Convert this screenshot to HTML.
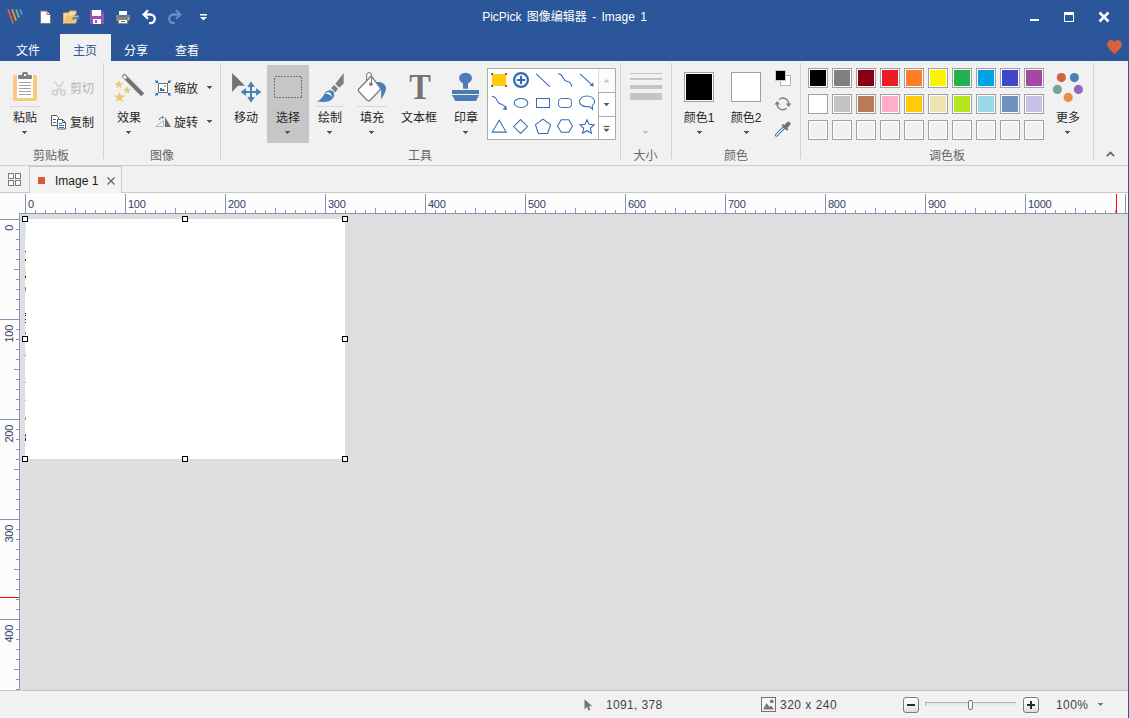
<!DOCTYPE html>
<html lang="zh-CN">
<head>
<meta charset="utf-8">
<title>PicPick 图像编辑器 - Image 1</title>
<style>
*{box-sizing:border-box;margin:0;padding:0}
html,body{width:1129px;height:718px;overflow:hidden;background:#f1f1f1}
body{position:relative;font-family:"Liberation Sans","Noto Sans CJK SC",sans-serif;font-size:12px;color:#262626}
.abs,#app *{position:absolute}
#app{position:absolute;left:0;top:0;width:1129px;height:718px;overflow:hidden}
#titlebar{left:0;top:0;width:1129px;height:61px;background:#2b579a}
#title{left:0;top:9px;width:1129px;text-align:center;color:#fff;font-size:12px;line-height:17px;white-space:pre;word-spacing:2px}
.tab{top:42px;height:18px;line-height:18px;color:#fff;font-size:12px;width:40px;text-align:center}
#tab-home{left:60px;top:34px;width:51px;height:27px;background:#f1f1f1}
#ribbon{left:0;top:61px;width:1128px;height:104px;background:#f1f1f1}
#ribbon-line{left:0;top:165px;width:1128px;height:1px;background:#cecece}
.gsep{top:63px;width:1px;height:96px;background:#d2d2d2}
.lbl{height:16px;line-height:16px;font-size:12px;color:#262626;white-space:nowrap;text-align:center}
.glbl{top:148px;height:16px;line-height:16px;font-size:12px;color:#666;white-space:nowrap;text-align:center}
.dis{color:#b1b1b1}
.arr{width:5px;height:1px;background:#555;color:#555}
.arr::before{content:"";position:absolute;left:1px;top:1px;width:3px;height:1px;background:inherit}
.arr::after{content:"";position:absolute;left:2px;top:2px;width:1px;height:1px;background:inherit}
.arr.lt{background:#c0c0c0}
.hsep{height:1px;background:#d8d8d8}
svg{position:absolute;overflow:visible}
#docbar{left:0;top:166px;width:1128px;height:27px;background:#f1f1f1}
#rulerh{left:0;top:193px;width:1128px;height:21px;background:#fcfcfc}
#rulerv{left:0;top:214px;width:20px;height:476px;background:#fcfcfc}
#canvas{left:20px;top:214px;width:1108px;height:476px;background:#dedede}
#status{left:0;top:690px;width:1128px;height:28px;background:#f1f1f1}
#rborder{left:1128px;top:0;width:1px;height:718px;background:#2b579a}
.rt{font-size:11px;letter-spacing:-.3px;color:#36426a;line-height:11px;white-space:nowrap}
.h{width:6px;height:6px;border:1px solid #000;background:#fff}
.rv{width:30px;height:11px;text-align:right;transform-origin:0 0;transform:rotate(-90deg) translate(-30px,0)}
.st{top:697px;height:16px;line-height:16px;font-size:12px;color:#444;white-space:pre;letter-spacing:.2px}
.zb{width:16px;height:16px;border:1px solid #7c7c7c;border-radius:3px;background:linear-gradient(#fdfdfd,#f4f4f4 50%,#dcdcdc)}
.pc{width:20px;height:20px;border:1px solid #a0a0a0;background:#f0f0f0;box-shadow:inset 0 0 0 1px #fff}
.pc i{left:1px;top:1px;width:16px;height:16px;display:block}
</style>
</head>
<body>
<div id="app">
<div id="titlebar"></div>
<div id="title">PicPick 图像编辑器 - Image 1</div>
<div id="tab-home"></div>
<div class="tab" style="left:8px">文件</div>
<div class="tab" style="left:65px;color:#2b579a">主页</div>
<div class="tab" style="left:116px">分享</div>
<div class="tab" style="left:167px">查看</div>
<svg style="left:0;top:0" width="1129" height="61" viewBox="0 0 1129 61">
<!-- logo -->
<g fill="none" stroke-width="1.700" stroke-linecap="butt">
<path d="M8 9.300L13 23.500" stroke="#e8642f"/>
<path d="M12 9.300L16.200 20.800" stroke="#f39a3c"/>
<path d="M16 9.300L19 17.600" stroke="#6fc08e"/>
<path d="M20 9.300L21.900 14.600" stroke="#4f9fd6"/>
</g>
<!-- new -->
<path d="M40.500 11h6.500l3.500 3.500v9h-10z" fill="#fff" stroke="#7c766c" stroke-width="1"/>
<path d="M47 11v3.500h3.500" fill="none" stroke="#7c766c" stroke-width="1"/>
<!-- open -->
<path d="M63.500 23.500v-10.500h5l1.500-2h6v3" fill="#f7d9a0" stroke="#e9b45c" stroke-width="1"/>
<path d="M63.300 23.500l3-8h12.500l-3 8z" fill="#f1c271"/>
<path d="M72.500 19.500c1-2 3.500-2.500 5.500-1.500" fill="none" stroke="#3f7cbf" stroke-width="1.600"/>
<path d="M79.300 15.800v4.200h-4z" fill="#3f7cbf"/>
<!-- save -->
<path d="M90 10h11.500l2.500 2.500v11.500h-14z" fill="#9553b3"/>
<rect x="92" y="10" width="9" height="6" fill="#fff"/>
<rect x="93" y="19" width="8" height="5" fill="#fff"/>
<rect x="95" y="20" width="2" height="3" fill="#9553b3"/>
<!-- print -->
<rect x="119" y="11" width="8" height="4" fill="#fff"/>
<rect x="116" y="15" width="14" height="6" fill="#8b8578"/>
<rect x="119" y="15" width="8" height="2" fill="#3f7cbf"/>
<rect x="118.500" y="19.500" width="9" height="4" fill="#fff" stroke="#8b8578"/>
<rect x="121" y="21" width="4" height="1" fill="#3f7cbf"/>
<rect x="128" y="18" width="1" height="1" fill="#fff"/>
<!-- undo -->
<path d="M144 14.500h6.500a4.300 4.300 0 0 1 0 8.600h-1.500" fill="none" stroke="#fff" stroke-width="2.300"/>
<path d="M148 10.300l-4.300 4.200 4.300 4.200" fill="none" stroke="#fff" stroke-width="2.300"/>
<!-- redo -->
<path d="M180 14.500h-6.500a4.300 4.300 0 0 0 0 8.600h1.500" fill="none" stroke="#6b8cc4" stroke-width="2.300"/>
<path d="M176 10.300l4.300 4.200-4.300 4.200" fill="none" stroke="#6b8cc4" stroke-width="2.300"/>
<!-- dropdown -->
<rect x="200" y="14" width="7" height="1.500" fill="#fff"/>
<path d="M200 17h7l-3.500 3.500z" fill="#fff"/>
<!-- window controls -->
<rect x="1030" y="19" width="9" height="2" fill="#fff"/>
<path d="M1064 12h10v10h-10zM1065 15v6h8v-6z" fill="#fff" fill-rule="evenodd"/>
<path d="M1099.500 12.500l9 9M1108.500 12.500l-9 9" stroke="#fff" stroke-width="2.500" fill="none"/>
<!-- heart -->
<path d="M1114.500 54c-3-3-7.300-6-7.300-9.800c0-2.500 1.800-4.200 3.900-4.200c1.500 0 2.700.8 3.400 2c.7-1.200 1.900-2 3.400-2c2.100 0 3.900 1.700 3.900 4.200c0 3.800-4.300 6.800-7.300 9.800z" fill="#d66140"/>
</svg>

<div id="ribbon"></div>
<div id="ribbon-line"></div>
<div class="gsep" style="left:103px"></div>
<div class="gsep" style="left:220px"></div>
<div class="gsep" style="left:620px"></div>
<div class="gsep" style="left:671px"></div>
<div class="gsep" style="left:800px"></div>
<div class="gsep" style="left:1093px"></div>
<div class="glbl" style="left:21px;width:60px">剪贴板</div>
<div class="glbl" style="left:132px;width:60px">图像</div>
<div class="glbl" style="left:390px;width:60px">工具</div>
<div class="glbl" style="left:615.5px;width:60px">大小</div>
<div class="glbl" style="left:706px;width:60px">颜色</div>
<div class="glbl" style="left:917px;width:60px">调色板</div>
<div style="left:267px;top:65px;width:42px;height:78px;background:#c6c6c6"></div>
<div class="lbl" style="left:-5px;top:110px;width:60px">粘贴</div>
<div class="lbl" style="left:99px;top:110px;width:60px">效果</div>
<div class="lbl" style="left:216px;top:110px;width:60px">移动</div>
<div class="lbl" style="left:258px;top:110px;width:60px">选择</div>
<div class="lbl" style="left:300px;top:110px;width:60px">绘制</div>
<div class="lbl" style="left:342px;top:110px;width:60px">填充</div>
<div class="lbl" style="left:389px;top:110px;width:60px">文本框</div>
<div class="lbl" style="left:436px;top:110px;width:60px">印章</div>
<div class="lbl" style="left:669px;top:110px;width:60px">颜色1</div>
<div class="lbl" style="left:716px;top:110px;width:60px">颜色2</div>
<div class="lbl" style="left:1038px;top:110px;width:60px">更多</div>
<div class="arr" style="left:22px;top:131px"></div>
<div class="arr" style="left:126px;top:131px"></div>
<div class="arr" style="left:285px;top:131px"></div>
<div class="arr" style="left:327px;top:131px"></div>
<div class="arr" style="left:369px;top:131px"></div>
<div class="arr" style="left:463px;top:131px"></div>
<div class="arr lt" style="left:643px;top:131px"></div>
<div class="arr" style="left:697px;top:131px"></div>
<div class="arr" style="left:744px;top:131px"></div>
<div class="arr" style="left:1065px;top:131px"></div>
<div class="hsep" style="left:10px;top:106px;width:30px"></div>
<div class="hsep" style="left:315px;top:106px;width:30px"></div>
<div class="hsep" style="left:357px;top:106px;width:30px"></div>
<div class="lbl dis" style="left:70px;top:81px;text-align:left">剪切</div>
<div class="lbl" style="left:70px;top:115px;text-align:left">复制</div>
<div class="lbl" style="left:174px;top:81px;text-align:left">缩放</div>
<div class="lbl" style="left:174px;top:115px;text-align:left">旋转</div>
<div class="arr" style="left:207px;top:86px"></div>
<div class="arr" style="left:207px;top:120px"></div>
<div style="left:487px;top:68px;width:129px;height:72px;background:#fff;border:1px solid #ababab"></div>
<div style="left:598px;top:69px;width:17px;height:23px;background:#fbfbfb;border-left:1px solid #dcdcdc"></div>
<div style="left:598px;top:92px;width:18px;height:25px;background:#fff;border:1px solid #ababab"></div>
<div style="left:598px;top:116px;width:18px;height:24px;background:#fff;border:1px solid #ababab"></div>
<div style="left:630px;top:73px;width:32px;height:1px;background:#c4c4c4"></div>
<div style="left:630px;top:78px;width:32px;height:2px;background:#c4c4c4"></div>
<div style="left:630px;top:85px;width:32px;height:4px;background:#c4c4c4"></div>
<div style="left:630px;top:93px;width:32px;height:7px;background:#c4c4c4"></div>
<div style="left:684px;top:72px;width:30px;height:30px;border:1px solid #a0a0a0;background:#fff"><i style="left:1px;top:1px;width:26px;height:26px;background:#000;display:block"></i></div>
<div style="left:731px;top:72px;width:30px;height:30px;border:1px solid #a0a0a0;background:#fff"></div>
<div class="pc" style="left:808px;top:68px"><i style="background:#000000"></i></div>
<div class="pc" style="left:832px;top:68px"><i style="background:#7f7f7f"></i></div>
<div class="pc" style="left:856px;top:68px"><i style="background:#880015"></i></div>
<div class="pc" style="left:880px;top:68px"><i style="background:#ed1c24"></i></div>
<div class="pc" style="left:904px;top:68px"><i style="background:#ff7f27"></i></div>
<div class="pc" style="left:928px;top:68px"><i style="background:#fff200"></i></div>
<div class="pc" style="left:952px;top:68px"><i style="background:#22b14c"></i></div>
<div class="pc" style="left:976px;top:68px"><i style="background:#00a2e8"></i></div>
<div class="pc" style="left:1000px;top:68px"><i style="background:#3f48cc"></i></div>
<div class="pc" style="left:1024px;top:68px"><i style="background:#a349a4"></i></div>
<div class="pc" style="left:808px;top:94px"><i style="background:#ffffff"></i></div>
<div class="pc" style="left:832px;top:94px"><i style="background:#c3c3c3"></i></div>
<div class="pc" style="left:856px;top:94px"><i style="background:#b97a57"></i></div>
<div class="pc" style="left:880px;top:94px"><i style="background:#ffaec9"></i></div>
<div class="pc" style="left:904px;top:94px"><i style="background:#ffc90e"></i></div>
<div class="pc" style="left:928px;top:94px"><i style="background:#efe4b0"></i></div>
<div class="pc" style="left:952px;top:94px"><i style="background:#b5e61d"></i></div>
<div class="pc" style="left:976px;top:94px"><i style="background:#99d9ea"></i></div>
<div class="pc" style="left:1000px;top:94px"><i style="background:#7092be"></i></div>
<div class="pc" style="left:1024px;top:94px"><i style="background:#c8bfe7"></i></div>
<div class="pc" style="left:808px;top:120px"></div>
<div class="pc" style="left:832px;top:120px"></div>
<div class="pc" style="left:856px;top:120px"></div>
<div class="pc" style="left:880px;top:120px"></div>
<div class="pc" style="left:904px;top:120px"></div>
<div class="pc" style="left:928px;top:120px"></div>
<div class="pc" style="left:952px;top:120px"></div>
<div class="pc" style="left:976px;top:120px"></div>
<div class="pc" style="left:1000px;top:120px"></div>
<div class="pc" style="left:1024px;top:120px"></div>
<svg style="left:0;top:0" width="1129" height="170" viewBox="0 0 1129 170">
<rect x="13" y="75" width="24" height="26" rx="1.800" fill="#fbc97e"/>
<rect x="17" y="75" width="16" height="23" fill="#fff"/>
<rect x="22" y="72" width="6" height="5" rx="2" fill="#808080"/><rect x="18" y="75" width="14" height="4" rx=".8" fill="#808080"/><rect x="24" y="74" width="2" height="2" fill="#fff"/>
<path d="M19 82.500h12M19 85.500h12M19 88.500h12M19 91.500h12M19 94.500h12" stroke="#a3a3a3" stroke-width="1" shape-rendering="crispEdges"/>
<g fill="none" stroke="#cbcbcb" stroke-width="1.300"><circle cx="55" cy="92.800" r="2.400"/><circle cx="63" cy="92.800" r="2.400"/></g>
<path d="M53.800 81.300L55 81.200L62.300 90.800L60.700 91.600ZM64.200 81.300L63 81.200L55.700 90.800L57.300 91.600Z" fill="#cbcbcb"/>
<path d="M51.500 115.500h5l2 2v8h-7z" fill="#fff" stroke="#5a5a5a" stroke-width="1"/>
<path d="M53 119.500h3M53 122.500h3" stroke="#2e6db4" stroke-width="1"/>
<path d="M57.500 119.500h5l3 3v6.500h-8z" fill="#fff" stroke="#5a5a5a" stroke-width="1"/><path d="M62.500 119.500v3h3" fill="none" stroke="#5a5a5a" stroke-width="1"/>
<path d="M59 123.500h3M59 125.500h5M59 127.500h5" stroke="#2e6db4" stroke-width="1" shape-rendering="crispEdges"/>
<path d="M124.500 73.500L144.200 93.300L141.200 96.300L121.500 76.500Z" fill="#737373"/>
<path d="M124.500 75L127 77.500L125.200 79.300L122.700 76.800Z" fill="#fff"/>
<path d="M118.90,79.90L120.06,83.00L123.37,83.15L120.78,85.21L121.66,88.40L118.90,86.57L116.14,88.40L117.02,85.21L114.43,83.15L117.74,83.00ZM127.10,86.00L128.14,88.77L131.09,88.90L128.78,90.75L129.57,93.60L127.10,91.96L124.63,93.60L125.42,90.75L123.11,88.90L126.06,88.77ZM119.50,91.60L120.93,95.43L125.02,95.61L121.82,98.15L122.91,102.09L119.50,99.84L116.09,102.09L117.18,98.15L113.98,95.61L118.07,95.43Z" fill="#f0c674"/>
<rect x="158.500" y="83.500" width="9" height="9" fill="#fff" stroke="#6e6e6e"/>
<path d="M160 91v-3h1.500l1 1.500 1-1 1.500 2.500z" fill="#2e6db4"/><rect x="164" y="85" width="2" height="2" fill="#f0b050"/>
<g stroke="#2e6db4" stroke-width="1.100" fill="none"><path d="M155.300 80.300l2 2M157.500 80.500v2h-2"/><path d="M170.700 80.300l-2 2M168.500 80.500v2h2"/><path d="M155.300 95.700l2-2M157.500 95.500v-2h-2"/><path d="M170.700 95.700l-2-2M168.500 95.500v-2h2"/></g>
<path d="M155.800 126.500H163.500V120.800Z" fill="#f6f6f6" stroke="#b4b4b4" stroke-width="1"/>
<path d="M165 117V127H171Z" fill="#707070"/>
<path d="M159.600 120C159.600 118 160.800 117.300 162.500 117.300" fill="none" stroke="#2e6db4" stroke-width="1"/><path d="M162.200 115.700L164 117.300L162.200 118.900Z" fill="#2e6db4"/>
<path d="M232.100 73V92L238 85.700H245Z" fill="#737373"/>
<g fill="#4a7fba"><rect x="250" y="84" width="2" height="16"/><rect x="243" y="91" width="16" height="2"/><path d="M251 81.600L254.700 86.800L252.800 87.300L251 85.300L249.200 87.300L247.300 86.800Z"/><path d="M251 102.400L254.700 97.200L252.800 96.700L251 98.700L249.200 96.700L247.300 97.200Z"/><path d="M240.600 92L245.800 88.300L246.300 90.200L244.300 92L246.300 93.800L245.800 95.700Z"/><path d="M261.400 92L256.200 88.300L255.700 90.200L257.700 92L255.700 93.800L256.200 95.700Z"/></g>
<rect x="274.500" y="76.500" width="27" height="21" fill="none" stroke="#727272" stroke-width="1" stroke-dasharray="2 1" shape-rendering="crispEdges"/>
<path d="M343.700 73V83.500L339.200 87.700L335.300 83.700Z" fill="#808080"/>
<path d="M334.200 84.900L338 88.800L335.300 92.600L331 88Z" fill="#808080"/>
<path d="M317 101.500C321 100 323 96.500 324.800 93.300C326.800 89.800 331.300 89.300 333.300 91.800C335.800 95 333.300 99.200 329.300 101C326.300 102.200 320.500 102 317 101.500Z" fill="#4a7fba"/>
<path d="M325.300 93.900C327 91.300 331.300 91.200 332 97.200C330.300 94.500 327.800 93.700 325.300 93.900Z" fill="#fff"/>
<path d="M371.200 76L381 88.800L370.200 100.200Q368.700 101.300 367.200 100.200L358.800 91.500Q357.700 90.200 358.800 89Z" fill="#fff" stroke="#7a7a7a" stroke-width="1.250" stroke-linejoin="round"/>
<path d="M366.600 80.800V75Q366.600 72.500 369.050 72.500Q371.500 72.500 371.500 75V83" fill="none" stroke="#7a7a7a" stroke-width="1"/>
<circle cx="370.900" cy="84.100" r="1.900" fill="#808080"/>
<path d="M376.200 82.200C381 81.300 386 84 386 88.500C386 92 383 96 381.300 99.700L381 88.800Z" fill="#4a7fba"/>
<g fill="#4a7db5"><ellipse cx="465.500" cy="78.100" rx="6.500" ry="5.400"/><rect x="463" y="82" width="5" height="6.700"/><rect x="452" y="90" width="27" height="4"/><path d="M452 95H479L476.100 101H455.200Z"/></g>
<rect x="492" y="74" width="14" height="12" fill="#ffc90e"/>
<g fill="#666"><rect x="491" y="73" width="2" height="2"/><rect x="505" y="73" width="2" height="2"/><rect x="491" y="85" width="2" height="2"/><rect x="505" y="85" width="2" height="2"/></g>
<g fill="none" stroke="#2e6db4">
<circle cx="521" cy="80" r="6.900" stroke-width="2.200"/><path d="M516.800 80h8.400M521 75.800v8.400" stroke-width="2.200"/>
<path d="M536.300 73.800L549.700 86.600" stroke-width="1.050"/>
<path d="M558 73.700C562 73.700 562.500 76.500 563.300 78.300C564.300 80.600 565.500 81.200 567.500 81.600C570 82.200 571.300 83.500 571.600 86.600" stroke-width="1.050"/>
<path d="M580.100 73.800L592.500 85.400" stroke-width="1.050"/><path d="M593.800 86.600L589.300 85.600L591.400 84.300L592.700 82.200Z" fill="#2e6db4" stroke="none"/>
<path d="M492 96.400C496 96.400 496.500 99 497.300 101C498.300 103.300 499.500 103.800 501.500 104.200C503.500 104.700 504.800 105.800 505.600 107.800" stroke-width="1.050"/><path d="M506.900 110L502.300 109.200L504.600 107.700L506.200 105.200Z" fill="#2e6db4" stroke="none"/>
<ellipse cx="521" cy="102.900" rx="6.800" ry="4.500" stroke-width="1.050"/>
<rect x="536.500" y="98.500" width="13" height="9" stroke-width="1"/>
<rect x="558.500" y="98.500" width="13" height="9" rx="3" stroke-width="1"/>
<path d="M587 96C591.300 96 594.500 98.400 594.500 101.400C594.500 103.200 593.600 104.600 592.200 105.600L592.600 109.200L589.300 106.600C588.600 106.700 587.800 106.800 587 106.800C582.800 106.800 579.500 104.400 579.500 101.400C579.500 98.400 582.800 96 587 96Z" stroke-width="1.050"/>
<path d="M499.200 120.300L506.200 132.100H492.200Z" stroke-width="1.050"/>
<path d="M520.600 119.600L527.500 126.500L520.600 133.400L513.700 126.500Z" stroke-width="1.050"/>
<path d="M543.00,119.20L550.51,124.66L547.64,133.49L538.36,133.49L535.49,124.66Z" stroke-width="1.050"/>
<path d="M572.50,125.95L568.75,132.19L561.25,132.19L557.50,125.95L561.25,119.71L568.75,119.71Z" stroke-width="1.050"/>
<path d="M587.00,119.70L589.06,124.37L594.13,124.88L590.33,128.28L591.41,133.27L587.00,130.70L582.59,133.27L583.67,128.28L579.87,124.88L584.94,124.37Z" stroke-width="1.050"/>
</g>
<path d="M603.500 82.200h6l-3-3.300z" fill="#c3c3c3"/>
<path d="M603.500 103h6l-3 3.300z" fill="#5a5a5a"/>
<path d="M603.500 126.500h6" stroke="#5a5a5a" stroke-width="1.200"/><path d="M603.500 128.800h6l-3 3.300z" fill="#5a5a5a"/>
<rect x="780.500" y="75.500" width="10" height="10" fill="#fff" stroke="#b4b4b4"/>
<rect x="775.500" y="70.500" width="10" height="10" fill="#000" stroke="#c8c8c8"/>
<g fill="none" stroke="#7a7a7a" stroke-width="1.300"><path d="M779.200 99.500A5.800 5.800 0 0 1 788.700 104.600"/><path d="M786.600 108.300A5.800 5.800 0 0 1 777.100 103.200"/></g><path d="M785.800 103.400H791.400L788.600 106.900ZM774.400 104.600H780L777.200 101.100Z" fill="#7a7a7a"/>
<path d="M784.200 127.400L776.500 135.100" stroke="#2e6db4" stroke-width="3.100" stroke-linecap="round" fill="none"/>
<path d="M784.200 127.400L776.600 135" stroke="#fff" stroke-width="1.200" stroke-linecap="round" fill="none"/>
<path d="M785.300 126.900L788.500 123.700" stroke="#737373" stroke-width="4.200" stroke-linecap="round" fill="none"/>
<path d="M782.300 124.600L787.700 130" stroke="#737373" stroke-width="2.200" fill="none"/>
<circle cx="1061.4" cy="77.6" r="4.600" fill="#d4613f"/>
<circle cx="1074.4" cy="77.6" r="4.600" fill="#4a7fba"/>
<circle cx="1057.4" cy="89.4" r="4.600" fill="#74a596"/>
<circle cx="1078.4" cy="89.4" r="4.600" fill="#9567bc"/>
<circle cx="1068.2" cy="97.4" r="4.600" fill="#e88f49"/>
<path d="M1106.800 156.200L1110.500 152.500L1114.200 156.200" fill="none" stroke="#666" stroke-width="1.800"/>
</svg>
<div style="left:400px;top:67px;width:40px;height:40px;line-height:40px;text-align:center;transform:scaleX(.9);font-family:'Liberation Serif',serif;font-size:36px;font-weight:bold;color:#737373">T</div>


<div id="docbar"></div>
<div style="left:0;top:192px;width:29px;height:1px;background:#c9c9c9"></div>
<div style="left:121px;top:192px;width:1007px;height:1px;background:#c9c9c9"></div>
<div id="doctab" style="left:29px;top:166px;width:93px;height:27px;background:#f3f3f3;border:1px solid #c9c9c9;border-bottom:none"></div>
<svg style="left:8px;top:173px" width="13" height="13" viewBox="0 0 13 13"><path d="M.5 .5h5v5h-5zM7.5 .5h5v5h-5zM.5 7.5h5v5h-5zM7.5 7.5h5v5h-5z" fill="#fafafa" stroke="#7c7c7c" stroke-width="1" shape-rendering="crispEdges"/></svg>
<div style="left:38px;top:177px;width:7px;height:7px;background:#d9593a"></div>
<div id="doctitle" style="left:55px;top:173px;height:16px;line-height:16px;font-size:12px;color:#1a1a1a;white-space:pre">Image 1</div>
<svg style="left:107px;top:177px" width="8" height="8" viewBox="0 0 8 8"><path d="M.5 .5l7 7M7.500 .5l-7 7" stroke="#666" stroke-width="1.3" fill="none"/></svg>

<div id="rulerh"></div>
<div id="rulerv"></div>
<div id="canvas"></div>
<svg style="left:0;top:0" width="1129" height="718" viewBox="0 0 1129 718"><path d="M25.5 194V213M35.5 210V213M45.5 210V213M55.5 210V213M65.5 210V213M75.5 208V213M85.5 210V213M95.5 210V213M105.5 210V213M115.5 210V213M125.5 194V213M135.5 210V213M145.5 210V213M155.5 210V213M165.5 210V213M175.5 208V213M185.5 210V213M195.5 210V213M205.5 210V213M215.5 210V213M225.5 194V213M235.5 210V213M245.5 210V213M255.5 210V213M265.5 210V213M275.5 208V213M285.5 210V213M295.5 210V213M305.5 210V213M315.5 210V213M325.5 194V213M335.5 210V213M345.5 210V213M355.5 210V213M365.5 210V213M375.5 208V213M385.5 210V213M395.5 210V213M405.5 210V213M415.5 210V213M425.5 194V213M435.5 210V213M445.5 210V213M455.5 210V213M465.5 210V213M475.5 208V213M485.5 210V213M495.5 210V213M505.5 210V213M515.5 210V213M525.5 194V213M535.5 210V213M545.5 210V213M555.5 210V213M565.5 210V213M575.5 208V213M585.5 210V213M595.5 210V213M605.5 210V213M615.5 210V213M625.5 194V213M635.5 210V213M645.5 210V213M655.5 210V213M665.5 210V213M675.5 208V213M685.5 210V213M695.5 210V213M705.5 210V213M715.5 210V213M725.5 194V213M735.5 210V213M745.5 210V213M755.5 210V213M765.5 210V213M775.5 208V213M785.5 210V213M795.5 210V213M805.5 210V213M815.5 210V213M825.5 194V213M835.5 210V213M845.5 210V213M855.5 210V213M865.5 210V213M875.5 208V213M885.5 210V213M895.5 210V213M905.5 210V213M915.5 210V213M925.5 194V213M935.5 210V213M945.5 210V213M955.5 210V213M965.5 210V213M975.5 208V213M985.5 210V213M995.5 210V213M1005.5 210V213M1015.5 210V213M1025.5 194V213M1035.5 210V213M1045.5 210V213M1055.5 210V213M1065.5 210V213M1075.5 208V213M1085.5 210V213M1095.5 210V213M1105.5 210V213M1115.5 210V213M1125.5 194V213M20 213.5H1128" stroke="#8697b4" stroke-width="1" fill="none" shape-rendering="crispEdges"/>
<path d="M0 219.5H19M16 229.5H19M16 239.5H19M16 249.5H19M16 259.5H19M14 269.5H19M16 279.5H19M16 289.5H19M16 299.5H19M16 309.5H19M0 319.5H19M16 329.5H19M16 339.5H19M16 349.5H19M16 359.5H19M14 369.5H19M16 379.5H19M16 389.5H19M16 399.5H19M16 409.5H19M0 419.5H19M16 429.5H19M16 439.5H19M16 449.5H19M16 459.5H19M14 469.5H19M16 479.5H19M16 489.5H19M16 499.5H19M16 509.5H19M0 519.5H19M16 529.5H19M16 539.5H19M16 549.5H19M16 559.5H19M14 569.5H19M16 579.5H19M16 589.5H19M16 599.5H19M16 609.5H19M0 619.5H19M16 629.5H19M16 639.5H19M16 649.5H19M16 659.5H19M14 669.5H19M16 679.5H19M16 689.5H19M19.5 213V690" stroke="#8697b4" stroke-width="1" fill="none" shape-rendering="crispEdges"/>
<path d="M1116.5 194V213M0 597.5H19" stroke="#f00" stroke-width="1" fill="none" shape-rendering="crispEdges"/>
</svg>
<div class="rt" style="left:28px;top:199px">0</div>
<div class="rt" style="left:128px;top:199px">100</div>
<div class="rt" style="left:228px;top:199px">200</div>
<div class="rt" style="left:328px;top:199px">300</div>
<div class="rt" style="left:428px;top:199px">400</div>
<div class="rt" style="left:528px;top:199px">500</div>
<div class="rt" style="left:628px;top:199px">600</div>
<div class="rt" style="left:728px;top:199px">700</div>
<div class="rt" style="left:828px;top:199px">800</div>
<div class="rt" style="left:928px;top:199px">900</div>
<div class="rt" style="left:1028px;top:199px">1000</div>
<div class="rt rv" style="left:4px;top:225px">0</div>
<div class="rt rv" style="left:4px;top:325px">100</div>
<div class="rt rv" style="left:4px;top:425px">200</div>
<div class="rt rv" style="left:4px;top:525px">300</div>
<div class="rt rv" style="left:4px;top:625px">400</div>
<div id="img" style="left:25px;top:219px;width:320px;height:240px;background:#fff"></div>
<div style="left:25px;top:223px;width:1px;height:9px;background:#dbe9ff"></div>
<div style="left:25px;top:232px;width:1px;height:9px;background:#eef5ff"></div>
<div style="left:25px;top:251px;width:1px;height:1px;background:#111"></div>
<div style="left:25px;top:252px;width:1px;height:6px;background:#d9f3fb"></div>
<div style="left:25px;top:259px;width:1px;height:1px;background:#8a1a10"></div>
<div style="left:25px;top:260px;width:1px;height:1px;background:#111"></div>
<div style="left:25px;top:269px;width:1px;height:7px;background:#fad9a0"></div>
<div style="left:25px;top:276px;width:1px;height:1px;background:#5a1010"></div>
<div style="left:25px;top:277px;width:1px;height:1px;background:#223"></div>
<div style="left:25px;top:287px;width:1px;height:3px;background:#6a86c4"></div>
<div style="left:25px;top:290px;width:1px;height:2px;background:#e8b070"></div>
<div style="left:25px;top:313px;width:1px;height:1px;background:#111"></div>
<div style="left:25px;top:315px;width:1px;height:1px;background:#111"></div>
<div style="left:25px;top:319px;width:1px;height:1px;background:#111"></div>
<div style="left:25px;top:322px;width:1px;height:1px;background:#111"></div>
<div style="left:25px;top:332px;width:1px;height:2px;background:#5a7fd0"></div>
<div style="left:25px;top:334px;width:1px;height:1px;background:#e8a050"></div>
<div style="left:25px;top:350px;width:1px;height:5px;background:#dcecff"></div>
<div style="left:25px;top:355px;width:1px;height:1px;background:#5a9cf0"></div>
<div style="left:25px;top:356px;width:1px;height:1px;background:#cfe4ff"></div>
<div style="left:25px;top:377px;width:1px;height:5px;background:#e6f6fd"></div>
<div style="left:25px;top:382px;width:1px;height:1px;background:#5a9cf0"></div>
<div style="left:25px;top:395px;width:1px;height:5px;background:#eef8ff"></div>
<div style="left:25px;top:400px;width:1px;height:1px;background:#8ec0f8"></div>
<div style="left:25px;top:417px;width:1px;height:2px;background:#d98a4a"></div>
<div style="left:25px;top:419px;width:1px;height:1px;background:#6a86c4"></div>
<div style="left:25px;top:434px;width:1px;height:3px;background:#2a6ae0"></div>
<div style="left:25px;top:438px;width:1px;height:1px;background:#1a1a60"></div>
<div style="left:25px;top:439px;width:1px;height:2px;background:#701030"></div>
<div class="h" style="left:22px;top:216px"></div>
<div class="h" style="left:182px;top:216px"></div>
<div class="h" style="left:342px;top:216px"></div>
<div class="h" style="left:22px;top:336px"></div>
<div class="h" style="left:342px;top:336px"></div>
<div class="h" style="left:22px;top:456px"></div>
<div class="h" style="left:182px;top:456px"></div>
<div class="h" style="left:342px;top:456px"></div>

<div id="status"></div>
<div style="left:0;top:690px;width:1128px;height:1px;background:#c6c6c6"></div>
<svg style="left:584px;top:699px" width="10" height="12" viewBox="0 0 10 12"><path d="M.5 .3V10.2L3 8l1.500 3.600 1.800-.8L4.800 7.300H8.300z" fill="#757575"/></svg>
<div class="st" style="left:606px;letter-spacing:.35px">1091, 378</div>
<svg style="left:761px;top:697px" width="15" height="15" viewBox="0 0 15 15"><rect x=".5" y=".5" width="14" height="14" fill="#f7f7f7" stroke="#707070" shape-rendering="crispEdges"/><path d="M2 12.500L5.500 6l3 4 1.500-1.600 3.200 4.100z" fill="#7a7a7a"/><circle cx="10.800" cy="4.300" r="1.900" fill="#7a7a7a"/></svg>
<div class="st" style="left:780px;letter-spacing:.5px">320 x 240</div>
<div class="zb" style="left:903px;top:697px"></div>
<div style="left:907px;top:704px;width:8px;height:2px;background:#2a2a2a"></div>
<div style="left:925px;top:702px;width:91px;height:4px;background:#e6eaea;border-top:1px solid #b4b4b4;border-left:1px solid #b4b4b4"></div>
<div style="left:968px;top:700px;width:5px;height:10px;background:#fafafa;border:1px solid #7a7a7a;border-radius:2px"></div>
<div class="zb" style="left:1023px;top:697px"></div>
<div style="left:1027px;top:704px;width:8px;height:2px;background:#2a2a2a"></div>
<div style="left:1030px;top:701px;width:2px;height:8px;background:#2a2a2a"></div>
<div class="st" style="left:1056px;letter-spacing:.4px">100%</div>
<div class="arr" style="left:1098px;top:703px;background:#777"></div>

<div id="rborder"></div>
</div>
</body>
</html>
